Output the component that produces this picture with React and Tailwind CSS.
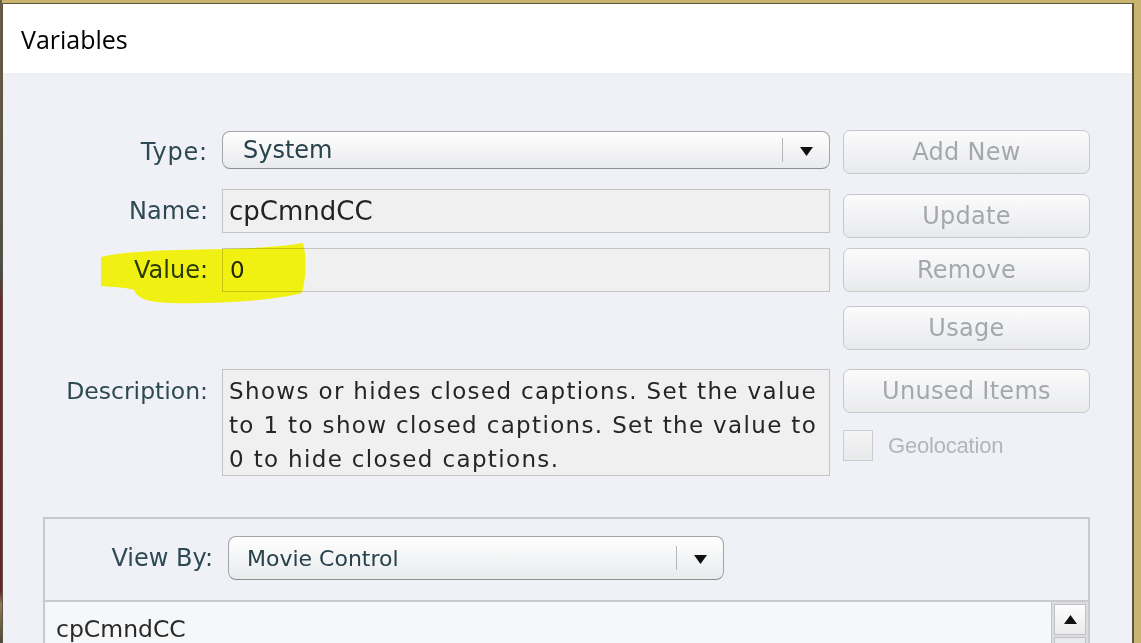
import React from 'react';

const ui = "font-['DejaVu_Sans',Verdana,sans-serif]";

function Arrow({ up = false }) {
  return (
    <svg width="15" height="11" viewBox="0 0 15 11">
      {up ? <polygon points="1,10 14,10 7.5,1" fill="#111" /> : <polygon points="1,1 14,1 7.5,10" fill="#111" />}
    </svg>
  );
}

function Select({ value, width, height, textSize }) {
  return (
    <div
      className={`flex items-center rounded-[8px] border border-[#a3a5a8] border-b-[#8d8f92] bg-gradient-to-b from-[#ffffff] to-[#e9eaec] shadow-[inset_0_1px_0_#fff] ${width} ${height}`}
    >
      <div className={`flex-1 text-[#27424c] ${textSize}`}>{value}</div>
      <div className="h-[24px] w-px bg-[#b4b6b8]" />
      <div className="flex w-[46px] justify-center pt-[2px]">
        <Arrow />
      </div>
    </div>
  );
}

function Button({ children, className = '' }) {
  return (
    <div
      className={`flex h-[44px] w-[247px] items-center justify-center rounded-[7px] border border-[#c6c8cb] bg-gradient-to-b from-[#fbfbfc] to-[#e9eaec] text-[24px] tracking-[0.3px] text-[#a4a8ac] ${className}`}
    >
      {children}
    </div>
  );
}

export default function App() {
  return (
    <div className={`relative flex h-[643px] w-[1141px] overflow-hidden bg-[#c9b56f] ${ui}`}>
      {/* desktop showing at the left edge */}
      <div className="w-[2px] bg-[linear-gradient(to_bottom,#6a5c43_0%,#5a5444_30%,#43504f_42%,#6d2733_46%,#6a2431_92%,#8c7b56_94%,#4d4a3a_100%)]" />

      <div className="mt-[3px] mr-[7px] flex flex-1 flex-col border-t border-r-2 border-l border-[#5c5341] bg-[#f0f1f6]">
        {/* title bar */}
        <div className="flex h-[69px] shrink-0 items-center bg-white pt-[3px] pl-[18px] font-['Open_Sans',sans-serif] text-[25px] text-black">
          Variables
        </div>

        {/* form */}
        <div className="flex pt-[57px]">
          <div className="flex flex-col">
            <div className="flex items-center">
              <div className="mr-[14px] w-[205px] pt-[4px] text-right text-[24px] tracking-[0.8px] text-[#2d4a54]">Type:</div>
              <Select value="System" width="w-[608px]" height="h-[38px]" textSize="pl-[20px] text-[24px]" />
            </div>

            <div className="mt-[19px] flex items-center">
              <div className="mr-[14px] w-[205px] text-right text-[24px] text-[#2d4a54]">Name:</div>
              <div className="flex h-[44px] w-[608px] items-center border border-[#c3c4c6] bg-[#f0f0f1] pl-[6px] text-[26px] text-[#222]">
                cpCmndCC
              </div>
            </div>

            <div className="mt-[15px] flex items-center">
              <div className="mr-[14px] w-[205px] text-right text-[24px] text-[#2a3a2c]">Value:</div>
              <div className="flex h-[44px] w-[608px] items-center border border-[#c3c4c6] bg-[#f0f0f1] pl-[7px] text-[23px] text-[#222]">
                0
              </div>
            </div>

            <div className="mt-[77px] flex items-start">
              <div className="mr-[14px] w-[205px] pt-[5px] text-right text-[23.5px] leading-[34px] text-[#2d4a54]">
                Description:
              </div>
              <div className="h-[107px] w-[608px] whitespace-nowrap border border-[#c3c4c6] bg-[#f0f0f1] pt-[4px] pl-[6px] text-[23px] leading-[34px] tracking-[1.35px] text-[#252525]">
                Shows or hides closed captions. Set the value
                <br />
                to 1 to show closed captions. Set the value to
                <br />
                0 to hide closed captions.
              </div>
            </div>
          </div>

          <div className="ml-[13px] flex flex-col">
            <Button className="h-[43px]">Add New</Button>
            <Button className="mt-[20px]">Update</Button>
            <Button className="mt-[10px]">Remove</Button>
            <Button className="mt-[14px]">Usage</Button>
            <Button className="mt-[19px]">Unused Items</Button>
            <div className="mt-[16px] flex items-center">
              <div className="h-[31px] w-[30px] border border-[#cbcdd0] bg-gradient-to-b from-[#f4f4f5] to-[#e8e9eb]" />
              <div className="ml-[15px] font-['Liberation_Sans',Arial,sans-serif] text-[22px] tracking-[-0.2px] text-[#b3b6b9]">
                Geolocation
              </div>
            </div>
          </div>
        </div>

        {/* view by panel */}
        <div className="mt-[41px] ml-[40px] flex w-[1047px] flex-1 flex-col border-t-2 border-r-2 border-l-2 border-[#c8cacd]">
          <div className="flex items-center pt-[17px] pb-[20px]">
            <div className="mr-[15px] w-[168px] text-right text-[24px] text-[#2d4a54]">View By:</div>
            <Select value="Movie Control" width="w-[496px]" height="h-[44px]" textSize="pl-[18px] text-[22px]" />
          </div>
          <div className="flex flex-1 border-t-2 border-[#c8cacd]">
            <div className="flex-1 bg-[#f6f7f9] pt-[10px] pl-[11px] text-[23.5px] leading-[34px] text-[#2a2a2a]">cpCmndCC</div>
            <div className="w-[37px] border-l border-[#c2c4c7] bg-[#dcdde0] px-[2px] pt-[2px]">
              <div className="flex h-[31px] items-center justify-center border border-[#c0c2c5] bg-gradient-to-b from-[#fdfdfd] to-[#ececee]">
                <Arrow up />
              </div>
              <div className="mt-[2px] h-[20px] border border-[#c0c2c5] bg-[#e9eaec]" />
            </div>
          </div>
        </div>
      </div>

      {/* yellow highlighter mark */}
      <svg className="pointer-events-none absolute top-0 left-0 mix-blend-multiply" width="1141" height="643">
        <path
          d="M101 257 C 130 250, 180 250, 225 249 C 250 248, 280 247, 303 243 C 307 258, 306 278, 302 293 C 270 301, 220 304, 170 303 C 150 302, 138 300, 134 290 C 125 287, 110 287, 101 286 Z"
          fill="#ffff12"
        />
      </svg>
    </div>
  );
}
